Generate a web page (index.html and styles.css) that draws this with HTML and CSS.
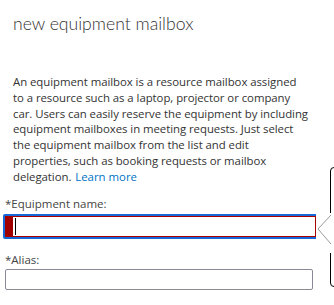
FILE: index.html
```html
<!DOCTYPE html>
<html>
<head>
<meta charset="utf-8">
<link rel="stylesheet" href="styles.css">
</head>
<body>
<div class="page">
  <h1 class="title">new equipment mailbox</h1>
  <p class="desc">An equipment mailbox is a resource mailbox assigned to a resource such as a laptop, projector or company car. Users can easily reserve the equipment by including equipment mailboxes in meeting requests. Just select the equipment mailbox from the list and edit properties, such as booking requests or mailbox delegation. <a class="link" href="#">Learn more</a></p>
  <div class="form">
    <label class="label">*Equipment name:</label>
    <div class="input focus"><span class="err"></span><span class="caret"></span></div>
    <label class="label alias">*Alias:</label>
    <div class="input plain"></div>
  </div>
  <div class="callout">
    <svg class="arrow" width="16" height="40" viewBox="0 0 16 40"><polyline points="15,2 2,16 15,31" fill="none" stroke="#9a9a9a" stroke-width="1"/></svg>
  </div>
</div>
</body>
</html>
```
FILE: styles.css
```css
html, body { margin: 0; padding: 0; background: #fff; }
body { width: 334px; height: 305px; overflow: hidden; font-family: "Open Sans", "Lato", sans-serif; color: #333; }
.page { position: relative; height: 305px; }
.title { margin: 0; padding: 11px 0 0 13px; font-family: "Lato", sans-serif; font-weight: 300; font-size: 17.6px; line-height: 26px; color: #333; }
.desc { margin: 37px 0 0 13px; width: 296px; font-size: 11.4px; line-height: 15.8px; color: #333; letter-spacing: -0.05px; }
.link { color: #0072c6; text-decoration: none; padding-left: 1px; letter-spacing: 0; }
.form { padding: 0 0 0 3px; margin-top: 11px; width: 316px; }
.label { display: block; font-size: 11.5px; line-height: 16px; color: #444; margin-left: 2px; }
.input { box-sizing: border-box; background: #fff; display: flex; align-items: center; }
.focus { height: 25px; width: 315px; border: 2px solid #1569d6; border-radius: 2px; margin-top: 2px; box-shadow: inset 0 0 0 1px #a80000; padding: 1px; }
.err { width: 7px; align-self: stretch; background: #a00000; }
.caret { width: 1px; height: 17px; background: #000; margin-left: 2px; }
.alias { margin-top: 13px; }
.plain { height: 21px; width: 308px; margin-left: 2px; margin-top: 1px; border: 1px solid #8a8a96; border-radius: 2px; }
.callout { position: absolute; left: 330px; top: 167px; width: 20px; height: 120px; border: 1px solid #000; border-radius: 4px; box-sizing: border-box; }
.arrow { position: absolute; left: -15px; top: 45px; background: #fff; }
```
